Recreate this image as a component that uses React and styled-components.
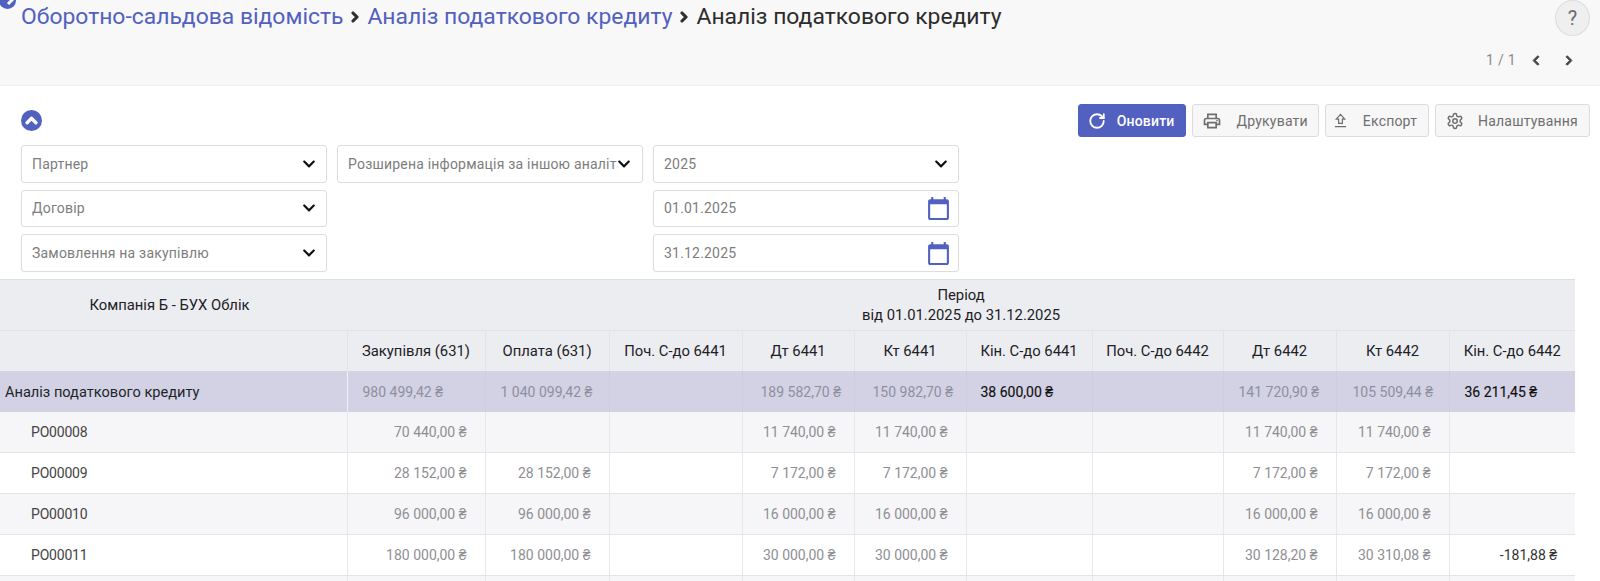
import React from 'react';
import styled, { createGlobalStyle } from 'styled-components';
import { FaChevronUp, FaChevronDown, FaChevronLeft, FaChevronRight } from 'react-icons/fa';
import { MdCalendarToday, MdOutlineLocalPrintshop } from 'react-icons/md';
import { LuRotateCw, LuSettings } from 'react-icons/lu';

const GlobalStyle = createGlobalStyle`
  html, body {
    margin: 0;
    padding: 0;
    height: 581px;
    overflow: hidden;
    background: #fff;
    font-family: Roboto, "Liberation Sans", sans-serif;
  }
`;

const columns = [347, 138, 124, 133, 112, 112, 126, 131, 113, 113, 126];

const heads = ['', 'Закупівля (631)', 'Оплата (631)', 'Поч. С-до 6441', 'Дт 6441', 'Кт 6441', 'Кін. С-до 6441', 'Поч. С-до 6442', 'Дт 6442', 'Кт 6442', 'Кін. С-до 6442'];

const rows = [
  ['PO00008', '70 440,00 ₴', '', '', '11 740,00 ₴', '11 740,00 ₴', '', '', '11 740,00 ₴', '11 740,00 ₴', ''],
  ['PO00009', '28 152,00 ₴', '28 152,00 ₴', '', '7 172,00 ₴', '7 172,00 ₴', '', '', '7 172,00 ₴', '7 172,00 ₴', ''],
  ['PO00010', '96 000,00 ₴', '96 000,00 ₴', '', '16 000,00 ₴', '16 000,00 ₴', '', '', '16 000,00 ₴', '16 000,00 ₴', ''],
  ['PO00011', '180 000,00 ₴', '180 000,00 ₴', '', '30 000,00 ₴', '30 000,00 ₴', '', '', '30 128,20 ₴', '30 310,08 ₴', '-181,88 ₴'],
  ['', '', '', '', '', '', '', '', '', '', ''],
];

const totals = [
  { text: '980 499,42 ₴', pad: 15 },
  { text: '1 040 099,42 ₴', pad: 15 },
  { text: '', pad: 15 },
  { text: '189 582,70 ₴', pad: 18 },
  { text: '150 982,70 ₴', pad: 18 },
  { text: '38 600,00 ₴', pad: 14, strong: true },
  { text: '', pad: 15 },
  { text: '141 720,90 ₴', pad: 15 },
  { text: '105 509,44 ₴', pad: 16 },
  { text: '36 211,45 ₴', pad: 15, strong: true },
];

const Page = styled.div`
  position: relative;
  width: 1600px;
  height: 581px;
  overflow: hidden;
`;

const Header = styled.header`
  height: 85px;
  background: #f8f8f8;
  border-bottom: 1px solid #eeeeee;
  padding: 0 10px 0 21px;
  display: flex;
  justify-content: space-between;
`;

const Breadcrumb = styled.div`
  display: flex;
  align-items: center;
  gap: 6px;
  height: 33px;
  font-size: 22.9px;
  color: #2c2c2c;
`;

const Crumb = styled.a`
  color: #5260bf;
`;

const Sep = styled(FaChevronRight)`
  width: 12px;
  height: 12px;
  color: #2c2c2c;
  stroke: currentColor;
  stroke-width: 50;
`;

const Corner = styled.div`
  position: absolute;
  left: -1px;
  top: -8px;
  width: 17px;
  height: 17px;
  border-radius: 50%;
  background: #5260bf;
  &::after {
    content: '';
    position: absolute;
    left: 8px;
    top: 8px;
    width: 7px;
    height: 3px;
    background: #fff;
    transform: rotate(-45deg);
  }
`;

const HeaderSide = styled.div`
  display: flex;
  flex-direction: column;
  align-items: flex-end;
`;

const Help = styled.div`
  width: 35px;
  height: 36px;
  box-sizing: border-box;
  border: 1px solid #dddddd;
  border-radius: 50%;
  background: #efefef;
  color: #6b6b6b;
  font-size: 20px;
  display: flex;
  align-items: center;
  justify-content: center;
`;

const Pager = styled.div`
  display: flex;
  align-items: center;
  margin-top: 14px;
  margin-right: 16px;
  font-size: 14px;
  letter-spacing: 0.3px;
  color: #8a8a8a;
  height: 20px;
  svg {
    width: 10px;
    height: 11px;
    color: #444;
    margin-left: 23px;
    stroke: currentColor;
    stroke-width: 40;
  }
  svg:first-of-type {
    margin-left: 15px;
  }
`;

const Filters = styled.section`
  height: 193px;
  padding: 18px 10px 0 21px;
  display: grid;
  grid-template-columns: 1fr auto;
  grid-template-rows: 33px auto;
  box-sizing: border-box;
`;

const CollapseBtn = styled.div`
  width: 21px;
  height: 21px;
  margin-top: 6px;
  border-radius: 50%;
  background: #5260bf;
  color: #fff;
  display: flex;
  align-items: center;
  justify-content: center;
  svg {
    width: 13px;
    height: 13px;
    stroke: currentColor;
    stroke-width: 50;
  }
`;

const Actions = styled.div`
  display: flex;
  gap: 6px;
`;

const Btn = styled.button`
  height: 33px;
  padding: 0 ${p => p.$right}px 0 ${p => p.$left}px;
  display: flex;
  align-items: center;
  gap: ${p => p.$gap}px;
  box-sizing: border-box;
  border-radius: 3px;
  border: 1px solid ${p => (p.$primary ? '#5260bf' : '#dcdcdc')};
  background: ${p => (p.$primary ? '#5260bf' : '#f7f7f7')};
  color: ${p => (p.$primary ? '#fff' : '#6f6f6f')};
  font-family: Roboto, sans-serif;
  font-size: 14px;
  font-weight: ${p => (p.$primary ? 500 : 400)};
  letter-spacing: 0.2px;
  svg {
    width: ${p => p.$icon}px;
    height: ${p => p.$icon}px;
    flex-shrink: 0;
  }
`;

const Fields = styled.div`
  grid-column: 1 / 3;
  display: grid;
  grid-template-columns: repeat(3, 305.5px);
  grid-auto-rows: 37.5px;
  column-gap: 10.5px;
  row-gap: 7.2px;
  margin-top: 8px;
  align-content: start;
`;

const Field = styled.div`
  grid-column: ${p => p.$col};
  display: flex;
  align-items: center;
  box-sizing: border-box;
  padding: 0 10px;
  border: 1px solid #dddddd;
  border-radius: 3px;
  background: #fff;
  color: #7d7d7d;
  font-size: 14px;
  letter-spacing: 0.2px;
`;

const FieldText = styled.span`
  flex: 1;
  min-width: 0;
  overflow: hidden;
  white-space: nowrap;
`;

const Chevron = styled(FaChevronDown)`
  width: 14px;
  height: 14px;
  margin-right: ${p => (p.$tight ? '1px' : '0')};
  color: #111;
  flex-shrink: 0;
`;

const Calendar = styled(MdCalendarToday)`
  width: 25px;
  height: 25px;
  margin-right: -3px;
  color: #5260bf;
  flex-shrink: 0;
`;

const ExportIcon = () => (
  <svg viewBox="0 0 16 16" fill="none" stroke="currentColor" strokeWidth="1.3">
    <path d="M8 1.5 3.5 6.5H6V11h4V6.5h2.5L8 1.5ZM2 14.5h12" />
  </svg>
);

const Table = styled.table`
  width: 1575px;
  table-layout: fixed;
  border-collapse: collapse;
  font-size: 14px;
`;

const PeriodCell = styled.th`
  height: 51px;
  padding: 0;
  box-sizing: border-box;
  background: #ecedf0;
  border-top: 1px solid #dedede;
  font-weight: 400;
  font-size: 14.8px;
  line-height: 20px;
  color: #1d2026;
  text-align: center;
`;

const CompanyCell = styled(PeriodCell)`
  padding-right: 8px;
`;

const HeadCell = styled.th`
  height: 40.8px;
  padding: 0;
  box-sizing: border-box;
  background: #ecedf0;
  border-top: 1px solid #e2e3e6;
  border-left: 1px solid #e2e3e6;
  font-weight: 400;
  font-size: 14.8px;
  color: #1d2026;
  text-align: center;
  white-space: nowrap;
  &:first-child {
    border-left: 0;
  }
`;

const TotalLabel = styled.td`
  height: 40.8px;
  padding: 0 0 0 5px;
  box-sizing: border-box;
  background: #d2d2e4;
  border-right: 1px solid #f0f0f6;
  color: #212529;
  font-size: 14.6px;
`;

const TotalCell = styled.td`
  padding: 0 0 0 ${p => p.$pad}px;
  box-sizing: border-box;
  background: #d2d2e4;
  border-right: 1px solid #cdcde0;
  color: ${p => (p.$strong ? '#111' : '#8f8f9e')};
  -webkit-text-stroke: ${p => (p.$strong ? '0.15px #111' : '0')};
  white-space: nowrap;
  &:last-child {
    border-right: 0;
  }
`;

const Row = styled.tr`
  background: ${p => (p.$even ? '#f6f6f8' : '#fff')};
`;

const NameCell = styled.td`
  height: 40.8px;
  padding: 0 0 0 31px;
  box-sizing: border-box;
  border-bottom: 1px solid #e3e4e7;
  color: #444;
  font-size: 14px;
  letter-spacing: -0.2px;
`;

const AmountCell = styled.td`
  padding: 0 18px 0 0;
  box-sizing: border-box;
  border-bottom: 1px solid #e3e4e7;
  border-left: 1px solid #e6e7ea;
  color: ${p => (p.$dark ? '#333' : '#8f8f94')};
  text-align: right;
  white-space: nowrap;
`;

export default function App() {
  return (
    <Page>
      <GlobalStyle />
      <Corner />
      <Header>
        <Breadcrumb>
          <Crumb>Оборотно-сальдова відомість</Crumb>
          <Sep />
          <Crumb>Аналіз податкового кредиту</Crumb>
          <Sep />
          <span>Аналіз податкового кредиту</span>
        </Breadcrumb>
        <HeaderSide>
          <Help>?</Help>
          <Pager>
            1 / 1
            <FaChevronLeft />
            <FaChevronRight />
          </Pager>
        </HeaderSide>
      </Header>
      <Filters>
        <CollapseBtn><FaChevronUp /></CollapseBtn>
        <Actions>
          <Btn $primary $icon={18} $left={9} $right={10} $gap={11}><LuRotateCw strokeWidth={2.4} />Оновити</Btn>
          <Btn $icon={20} $left={9} $right={10} $gap={15}><MdOutlineLocalPrintshop />Друкувати</Btn>
          <Btn $icon={15} $left={7} $right={11} $gap={15}><ExportIcon />Експорт</Btn>
          <Btn $icon={18} $left={10} $right={11} $gap={14}><LuSettings />Налаштування</Btn>
        </Actions>
        <Fields>
          <Field $col={1}><FieldText>Партнер</FieldText><Chevron /></Field>
          <Field $col={2}><FieldText>Розширена інформація за іншою аналітикою</FieldText><Chevron $tight /></Field>
          <Field $col={3}><FieldText>2025</FieldText><Chevron /></Field>
          <Field $col={1}><FieldText>Договір</FieldText><Chevron /></Field>
          <Field $col={3}><FieldText>01.01.2025</FieldText><Calendar /></Field>
          <Field $col={1}><FieldText>Замовлення на закупівлю</FieldText><Chevron /></Field>
          <Field $col={3}><FieldText>31.12.2025</FieldText><Calendar /></Field>
        </Fields>
      </Filters>
      <Table>
        <colgroup>
          {columns.map((w, i) => <col key={i} style={{ width: w }} />)}
        </colgroup>
        <thead>
          <tr>
            <CompanyCell>Компанія Б - БУХ Облік</CompanyCell>
            <PeriodCell colSpan={10}>Період<br />від 01.01.2025 до 31.12.2025</PeriodCell>
          </tr>
          <tr>
            {heads.map((h, i) => <HeadCell key={i}>{h}</HeadCell>)}
          </tr>
        </thead>
        <tbody>
          <tr>
            <TotalLabel>Аналіз податкового кредиту</TotalLabel>
            {totals.map((t, i) => (
              <TotalCell key={i} $pad={t.pad} $strong={t.strong}>{t.text}</TotalCell>
            ))}
          </tr>
          {rows.map((row, r) => (
            <Row key={r} $even={r % 2 === 0}>
              <NameCell>{row[0]}</NameCell>
              {row.slice(1).map((v, i) => (
                <AmountCell key={i} $dark={i === 9}>{v}</AmountCell>
              ))}
            </Row>
          ))}
        </tbody>
      </Table>
    </Page>
  );
}
